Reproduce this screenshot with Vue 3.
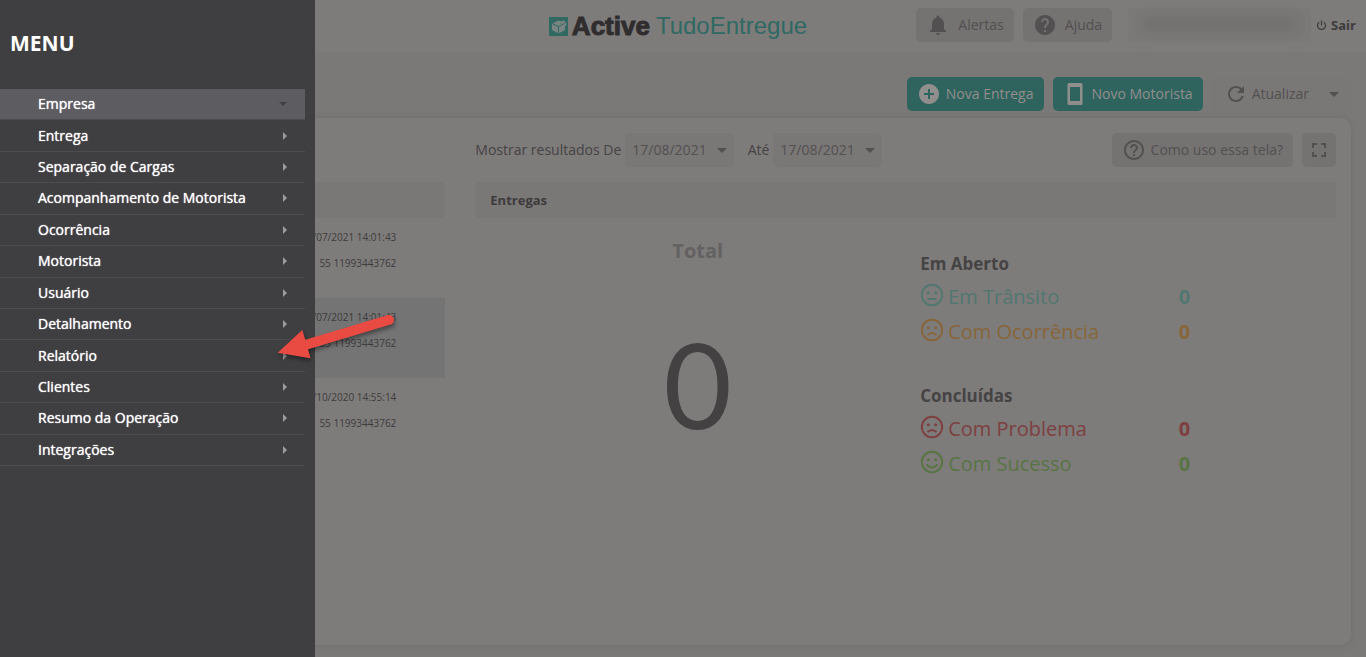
<script setup>
import { ref } from 'vue'

const menu = [
  'Empresa',
  'Entrega',
  'Separação de Cargas',
  'Acompanhamento de Motorista',
  'Ocorrência',
  'Motorista',
  'Usuário',
  'Detalhamento',
  'Relatório',
  'Clientes',
  'Resumo da Operação',
  'Integrações',
]
const open = ref('Empresa')

const drivers = [
  { date: '/07/2021 14:01:43', phone: '55 11993443762' },
  { date: '/07/2021 14:01:43', phone: '55 11993443762', selected: true },
  { date: '/10/2020 14:55:14', phone: '55 11993443762' },
]

const groups = [
  {
    title: 'Em Aberto',
    rows: [
      { label: 'Em Trânsito', tone: 'transit', mouth: 'M7.5 16h9' },
      { label: 'Com Ocorrência', tone: 'issue', mouth: 'M7.5 17.200q4.500-4.500 9 0' },
    ],
  },
  {
    title: 'Concluídas',
    rows: [
      { label: 'Com Problema', tone: 'problem', mouth: 'M7.5 17.200q4.500-4.500 9 0' },
      { label: 'Com Sucesso', tone: 'success', mouth: 'M6.500 14.500q5.500 6 11 0' },
    ],
  },
]
</script>

<template>
  <div class="page">
    <header class="top">
      <div></div>
      <a class="logo" href="#">
        <svg width="19" height="19" viewBox="0 0 19 19" aria-hidden="true">
          <rect width="19" height="19" fill="#2f6962" />
          <path d="M3 6.500L9.500 3.500 12 4.500a3.200 3.200 0 1 1 4 5V13l-6.500 3.500L3 13z" fill="#7a8482" />
          <path d="M3 6.500l6.500 3 3-1.200M9.500 9.500v7M12 6.500l1.500 1.500 3-3" fill="none" stroke="#2f6962" />
        </svg>
        <span class="brand">Active</span>
        <span class="product">TudoEntregue</span>
      </a>
      <div class="top-right">
        <button class="btn alerts" type="button">
          <svg width="24" height="24" viewBox="0 0 24 24" aria-hidden="true"><path fill="currentColor" d="M12 22c1.100 0 2-.9 2-2h-4c0 1.100.89 2 2 2zm6-6v-5c0-3.070-1.640-5.640-4.500-6.320V4c0-.83-.67-1.500-1.500-1.500s-1.500.67-1.500 1.500v.68C7.630 5.360 6 7.920 6 11v5l-2 2v1h16v-1l-2-2z" /></svg>
          <span>Alertas</span>
        </button>
        <button class="btn help" type="button">
          <svg width="24" height="24" viewBox="0 0 24 24" aria-hidden="true"><path fill="currentColor" d="M12 2C6.480 2 2 6.480 2 12s4.480 10 10 10 10-4.480 10-10S17.520 2 12 2zm1 17h-2v-2h2v2zm2.070-7.750l-.9.920C13.450 12.900 13 13.500 13 15h-2v-.5c0-1.100.45-2.100 1.170-2.830l1.240-1.260c.37-.36.59-.86.59-1.410 0-1.100-.9-2-2-2s-2 .9-2 2H8c0-2.210 1.790-4 4-4s4 1.790 4 4c0 .88-.36 1.680-.93 2.250z" /></svg>
          <span>Ajuda</span>
        </button>
        <div class="account"><i></i></div>
        <a class="exit" href="#">
          <svg width="11" height="11" viewBox="0 0 11 11" aria-hidden="true"><path d="M3.200 2.200a4 4 0 1 0 4.600 0M5.500.5v5" fill="none" stroke="currentColor" stroke-width="1.200" /></svg>
          Sair
        </a>
      </div>
    </header>

    <main>
      <div class="actions">
        <button class="btn primary" type="button">
          <svg width="24" height="24" viewBox="0 0 24 24" aria-hidden="true"><path fill="currentColor" d="M12 2C6.480 2 2 6.480 2 12s4.480 10 10 10 10-4.480 10-10S17.520 2 12 2zm5 11h-4v4h-2v-4H7v-2h4V7h2v4h4v2z" /></svg>
          <span>Nova Entrega</span>
        </button>
        <button class="btn primary driver" type="button">
          <svg width="24" height="24" viewBox="0 0 24 24" aria-hidden="true"><path fill="currentColor" fill-rule="evenodd" d="M6 1h12q1.500 0 1.500 1.500v19Q19.500 23 18 23H6q-1.500 0-1.500-1.500v-19Q4.500 1 6 1zM7 5v14h10V5z" /></svg>
          <span>Novo Motorista</span>
        </button>
        <button class="btn refresh" type="button">
          <svg width="24" height="24" viewBox="0 0 24 24" aria-hidden="true"><path fill="currentColor" d="M17.650 6.350C16.200 4.900 14.210 4 12 4c-4.420 0-7.990 3.580-7.990 8s3.570 8 7.990 8c3.730 0 6.840-2.550 7.730-6h-2.080c-.82 2.330-3.040 4-5.650 4-3.310 0-6-2.690-6-6s2.690-6 6-6c1.660 0 3.140.69 4.220 1.780L13 11h7V4l-2.350 2.350z" /></svg>
          <span>Atualizar</span>
          <i class="caret"></i>
        </button>
      </div>

      <section class="panel">
        <div class="col drivers-col">
          <div class="bar"></div>
          <ul class="drivers">
            <li v-for="(d, i) in drivers" :key="i" :class="{ selected: d.selected }">
              <span>{{ d.date }}</span>
              <span>{{ d.phone }}</span>
            </li>
          </ul>
        </div>

        <div class="col results">
          <div class="filters">
            <span>Mostrar resultados De</span>
            <button class="btn date" type="button" aria-label="De 17/08/2021"><span>17/08/2021</span><i class="caret"></i></button>
            <span class="until">Até</span>
            <button class="btn date" type="button" aria-label="Até 17/08/2021"><span>17/08/2021</span><i class="caret"></i></button>
            <button class="btn how" type="button">
              <svg width="24" height="24" viewBox="0 0 24 24" aria-hidden="true"><path fill="currentColor" d="M11 18h2v-2h-2v2zm1-16C6.480 2 2 6.480 2 12s4.480 10 10 10 10-4.480 10-10S17.520 2 12 2zm0 18c-4.410 0-8-3.590-8-8s3.590-8 8-8 8 3.590 8 8-3.590 8-8 8zm0-14c-2.210 0-4 1.790-4 4h2c0-1.100.9-2 2-2s2 .9 2 2c0 2-3 1.750-3 5h2c0-2.250 3-2.500 3-5 0-2.210-1.790-4-4-4z" /></svg>
              <span>Como uso essa tela?</span>
            </button>
            <button class="btn full" type="button" aria-label="Tela cheia">
              <svg width="24" height="24" viewBox="0 0 24 24" aria-hidden="true"><path fill="currentColor" d="M7 14H5v5h5v-2H7v-3zm-2-4h2V7h3V5H5v5zm12 7h-3v2h5v-5h-2v3zM14 5v2h3v3h2V5h-5z" /></svg>
            </button>
          </div>
          <h2 class="bar">Entregas</h2>
          <div class="summary">
            <div class="total">
              <h3>Total</h3>
              <strong>0</strong>
            </div>
            <div class="status">
              <section v-for="g in groups" :key="g.title">
                <h4>{{ g.title }}</h4>
                <p v-for="r in g.rows" :key="r.label" :class="r.tone">
                  <svg width="24" height="24" viewBox="0 0 24 24" aria-hidden="true">
                    <circle cx="12" cy="12" r="10.200" fill="none" stroke="currentColor" stroke-width="1.900" />
                    <circle cx="8.300" cy="9.700" r="1.500" fill="currentColor" />
                    <circle cx="15.700" cy="9.700" r="1.500" fill="currentColor" />
                    <path :d="r.mouth" fill="none" stroke="currentColor" stroke-width="1.900" />
                  </svg>
                  <span>{{ r.label }}</span>
                  <b>0</b>
                </p>
              </section>
            </div>
          </div>
        </div>
      </section>
    </main>

    <nav class="menu" aria-label="Menu">
      <h1>MENU</h1>
      <ul>
        <li v-for="item in menu" :key="item">
          <button type="button" :class="{ open: item === open }" @click="open = item">
            <span>{{ item }}</span><i></i>
          </button>
        </li>
      </ul>
    </nav>

    <svg class="arrow" width="130" height="60" viewBox="0 0 130 60" aria-hidden="true">
      <path d="M2.700 42.700L27.300 20l3 9.700L113 5.100a5 5 0 0 1 3.500 9.200L33 39.300l2.500 9z" fill="#e94b43" />
    </svg>
  </div>
</template>

<style>
body {
  margin: 0;
  background: #7b7878;
}
</style>

<style scoped>
* {
  box-sizing: border-box;
}
.page {
  position: relative;
  min-height: 100vh;
  display: flex;
  flex-direction: column;
  font-family: 'Open Sans', 'Noto Sans', sans-serif;
  font-size: 14px;
  color: #454344;
  background: #7b7878;
  overflow: hidden;
}
h1, h2, h3, h4, p, ul {
  margin: 0;
  padding: 0;
}
ul {
  list-style: none;
}
svg {
  flex: none;
}
a {
  color: inherit;
  text-decoration: none;
}
.top {
  display: grid;
  grid-template-columns: minmax(0, 1fr) auto minmax(0, 1fr);
  height: 53px;
  padding-right: 10px;
  align-items: center;
  background: #7e7b7b;
  border-bottom: 1px solid #7a7777;
}
.logo {
  display: flex;
  align-items: center;
  font-family: 'Liberation Sans', Arial, sans-serif;
  font-size: 24px;
}
.brand {
  margin: 0 6px 0 4px;
  font-size: 26px;
  font-weight: 700;
  color: #2f2d2e;
  -webkit-text-stroke: 1px #2f2d2e;
}
.product {
  color: #2f6962;
}
.top-right {
  display: flex;
  justify-content: flex-end;
  align-items: center;
  padding-bottom: 2px;
}
.btn {
  display: flex;
  align-items: center;
  height: 34px;
  padding: 0 10px;
  border: 0;
  border-radius: 5px;
  font: inherit;
  color: #525051;
  background: #757272;
  white-space: nowrap;
}
.btn span,
.filters > span,
.menu span {
  padding-bottom: 1px;
}
.alerts,
.help {
  gap: 8px;
}
.help {
  margin-left: 9px;
}
.account {
  width: 183px;
  height: 34px;
  margin: 0 5px 0 16px;
  padding: 7px 12px;
  background: #7c7979;
}
.account i {
  display: block;
  height: 18px;
  background: #737070;
  filter: blur(7px);
}
.exit {
  display: flex;
  align-items: center;
  gap: 4px;
  font-size: 13px;
  font-weight: 700;
  color: #3c3a3b;
}
main {
  flex: 1;
  display: flex;
  flex-direction: column;
  padding: 24px 15px 12px;
}
.actions {
  display: flex;
  justify-content: flex-end;
  gap: 9px;
}
.primary {
  gap: 5px;
  color: #918e8e;
  background: #2f645e;
}
.refresh {
  gap: 4px;
  padding: 0 12px;
  background: #7a7777;
}
.caret {
  border: 5px solid transparent;
  border-top-color: currentColor;
  border-bottom: 0;
}
.refresh .caret {
  margin-left: 16px;
}
.panel {
  flex: 1;
  display: flex;
  margin-top: 7px;
  padding-top: 15px;
  border-radius: 10px;
  background: #7e7b7b;
  box-shadow: 0 0 6px #6f6c6c;
}
.col {
  padding: 0 15px;
}
.drivers-col {
  width: 33.333%;
  padding-top: 49px;
}
.results {
  width: 66.667%;
}
.bar {
  height: 36px;
  padding: 0 15px;
  line-height: 36px;
  font-size: 13px;
  border-radius: 3px;
  background: #7a7777;
  color: #3d3b3c;
}
.drivers li {
  display: flex;
  flex-direction: column;
  align-items: flex-end;
  height: 80px;
  padding: 6px 49px 0 0;
  font-size: 10px;
  line-height: 26px;
  color: #3d3b3c;
}
.drivers .selected {
  background: #737473;
}
.filters {
  display: flex;
  align-items: center;
  height: 34px;
  margin-bottom: 15px;
}
.date {
  gap: 10px;
  margin-left: 4px;
  padding: 0 7px;
  background: #7a7777;
}
.until {
  margin-left: 14px;
}
.how {
  gap: 5px;
  margin-left: auto;
}
.full {
  margin-left: 9px;
  padding: 0 5px;
}
.summary {
  display: grid;
  grid-template-columns: 445fr 416fr;
}
.total {
  padding-top: 20px;
  text-align: center;
}
.total h3 {
  font-size: 20px;
  line-height: 26px;
  color: #636162;
}
.total strong {
  display: block;
  margin-top: 40px;
  font-family: Lato, sans-serif;
  font-size: 118px;
  line-height: 160px;
  font-weight: 400;
  color: #434142;
}
.status {
  padding-top: 33px;
}
.status section {
  width: 270px;
  margin-bottom: 36px;
}
.status h4 {
  font-size: 17px;
  line-height: 26px;
}
.status p {
  display: flex;
  align-items: center;
  gap: 4px;
  height: 35px;
  font-size: 20px;
}
.status p span,
.status b {
  padding-top: 3px;
}
.status b {
  margin-left: auto;
}
.transit {
  color: #517770;
}
.issue {
  color: #876639;
}
.problem {
  color: #7d4040;
}
.success {
  color: #587443;
}
.menu {
  position: absolute;
  top: 0;
  bottom: 0;
  left: 0;
  width: 315px;
  padding-right: 10px;
  background: #3f3f41;
  color: #fff;
}
.menu h1 {
  padding: 28px 10px 31px;
  font-size: 21px;
  line-height: 30px;
}
.menu ul {
  display: flex;
  flex-direction: column;
  min-height: 377px;
}
.menu li {
  flex: 1;
  display: flex;
  border-bottom: 1px solid #4c4c4f;
}
.menu button {
  flex: 1;
  display: flex;
  align-items: center;
  justify-content: space-between;
  padding: 0 18px 0 38px;
  border: 0;
  font: inherit;
  font-weight: 500;
  color: #fff;
  text-shadow: 0 0 1px #fff;
  background: none;
}
.menu i {
  border: 4px solid transparent;
  border-left-color: #9b9b9d;
  border-right: 0;
}
.menu .open {
  background: #5d5d61;
}
.menu .open i {
  border: 4px solid transparent;
  border-top-color: #414143;
  border-bottom: 0;
}
.arrow {
  position: absolute;
  left: 275px;
  top: 310px;
  filter: drop-shadow(1px 3px 2px rgba(0, 0, 0, 0.4));
}
</style>
